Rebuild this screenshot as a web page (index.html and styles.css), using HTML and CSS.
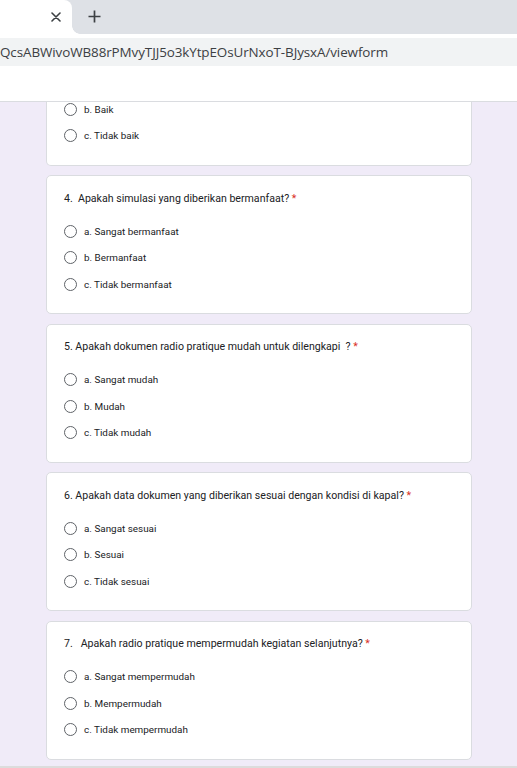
FILE: index.html
```html
<!DOCTYPE html>
<html lang="id">
<head>
<meta charset="utf-8">
<title>Formulir</title>
<link rel="stylesheet" href="styles.css">
</head>
<body>
<div class="window">
  <div class="tabstrip">
    <div class="tab">
      <svg class="tab-close" width="10" height="10" viewBox="0 0 10 10"><path d="M1 1L9 9M9 1L1 9" stroke="#3c4043" stroke-width="1.6" stroke-linecap="round"/></svg>
    </div>
    <svg class="newtab" width="13" height="13" viewBox="0 0 13 13"><path d="M6.5 0.5V12.5M0.5 6.5H12.5" stroke="#3c4043" stroke-width="1.7"/></svg>
  </div>
  <div class="toolbar">
    <div class="omnibox">QcsABWivoWB88rPMvyTJJ5o3kYtpEOsUrNxoT-BJysxA/viewform</div>
  </div>
  <div class="bookmarks"></div>
  <main class="page">
    <section class="card card-partial">
      <label class="option"><span class="radio"></span><span class="opt-text">b. Baik</span></label>
      <label class="option"><span class="radio"></span><span class="opt-text">c. Tidak baik</span></label>
    </section>

    <section class="card">
      <div class="question">4.&nbsp; Apakah simulasi yang diberikan bermanfaat? <span class="req">*</span></div>
      <label class="option"><span class="radio"></span><span class="opt-text">a. Sangat bermanfaat</span></label>
      <label class="option"><span class="radio"></span><span class="opt-text">b. Bermanfaat</span></label>
      <label class="option"><span class="radio"></span><span class="opt-text">c. Tidak bermanfaat</span></label>
    </section>

    <section class="card">
      <div class="question">5. Apakah dokumen radio pratique mudah untuk dilengkapi&nbsp; ? <span class="req">*</span></div>
      <label class="option"><span class="radio"></span><span class="opt-text">a. Sangat mudah</span></label>
      <label class="option"><span class="radio"></span><span class="opt-text">b. Mudah</span></label>
      <label class="option"><span class="radio"></span><span class="opt-text">c. Tidak mudah</span></label>
    </section>

    <section class="card">
      <div class="question">6. Apakah data dokumen yang diberikan sesuai dengan kondisi di kapal? <span class="req">*</span></div>
      <label class="option"><span class="radio"></span><span class="opt-text">a. Sangat sesuai</span></label>
      <label class="option"><span class="radio"></span><span class="opt-text">b. Sesuai</span></label>
      <label class="option"><span class="radio"></span><span class="opt-text">c. Tidak sesuai</span></label>
    </section>

    <section class="card">
      <div class="question">7.&nbsp;&nbsp; Apakah radio pratique mempermudah kegiatan selanjutnya? <span class="req">*</span></div>
      <label class="option"><span class="radio"></span><span class="opt-text">a. Sangat mempermudah</span></label>
      <label class="option"><span class="radio"></span><span class="opt-text">b. Mempermudah</span></label>
      <label class="option"><span class="radio"></span><span class="opt-text">c. Tidak mempermudah</span></label>
    </section>
  </main>
  <div class="bottom-edge"></div>
</div>
</body>
</html>
```

FILE: styles.css
```css
* { box-sizing: border-box; }

html, body {
  margin: 0;
  padding: 0;
  height: 768px;
  overflow: hidden;
  background: #ffffff;
}

body {
  font-family: Roboto, "Noto Sans", Arial, sans-serif;
  color: #202124;
}

.window {
  display: flex;
  flex-direction: column;
  height: 768px;
}

/* ---------- browser chrome ---------- */
.tabstrip {
  height: 34px;
  background: #dee1e6;
  display: flex;
  align-items: center;
  flex-shrink: 0;
}

.tab {
  position: relative;
  width: 72px;
  height: 34px;
  background: #ffffff;
  border-top-right-radius: 8px;
  display: flex;
  align-items: center;
  justify-content: flex-end;
  padding-right: 11px;
}

.tab::after {
  content: "";
  position: absolute;
  right: -8px;
  bottom: 0;
  width: 8px;
  height: 8px;
  background: radial-gradient(circle at 100% 0, transparent 7.5px, #ffffff 8px);
}

.tab-close { display: block; }

.newtab {
  display: block;
  margin-left: 16px;
  margin-top: -2px;
}

.toolbar {
  height: 32px;
  padding-top: 4px;
  background: #ffffff;
  flex-shrink: 0;
}

.omnibox {
  height: 28px;
  background: #f1f3f4;
  display: flex;
  align-items: center;
  font-family: "Open Sans", "Noto Sans", sans-serif;
  font-size: 13.45px;
  color: #3c4043;
  white-space: nowrap;
  overflow: hidden;
  padding-left: 0;
  letter-spacing: -0.1px;
}

.bookmarks {
  height: 36px;
  background: #ffffff;
  border-bottom: 1px solid #dadce0;
  flex-shrink: 0;
}

/* ---------- form page ---------- */
.page {
  flex: 1;
  background: #f0ebf8;
  overflow: hidden;
  display: flex;
  flex-direction: column;
  gap: 9.5px;
  padding: 0 45px 0 46px;
}

.card {
  background: #ffffff;
  border: 1px solid #dadce0;
  border-radius: 5px;
  padding: 14.5px 17px 15.75px 17px;
  height: 139px;
  flex-shrink: 0;
}

.card-partial {
  margin-top: -6.25px;
  border-top: none;
  border-top-left-radius: 0;
  border-top-right-radius: 0;
  padding-top: 0;
  height: auto;
}

.question {
  font-size: 10.6px;
  line-height: 16px;
  height: 16px;
  margin-bottom: 11.25px;
  color: #202124;
  white-space: nowrap;
}

.req { color: #d93025; }

.option {
  display: flex;
  align-items: center;
  height: 26.5px;
}

.radio {
  width: 13px;
  height: 13px;
  border: 1.4px solid #5f6368;
  border-radius: 50%;
  flex-shrink: 0;
}

.opt-text {
  margin-left: 7px;
  font-size: 9.9px;
  color: #202124;
  white-space: nowrap;
}

.bottom-edge {
  height: 8px;
  background: #f0ebf8;
  border-bottom: 2px solid #dcdcdc;
  flex-shrink: 0;
  margin-top: -6px;
}
```
